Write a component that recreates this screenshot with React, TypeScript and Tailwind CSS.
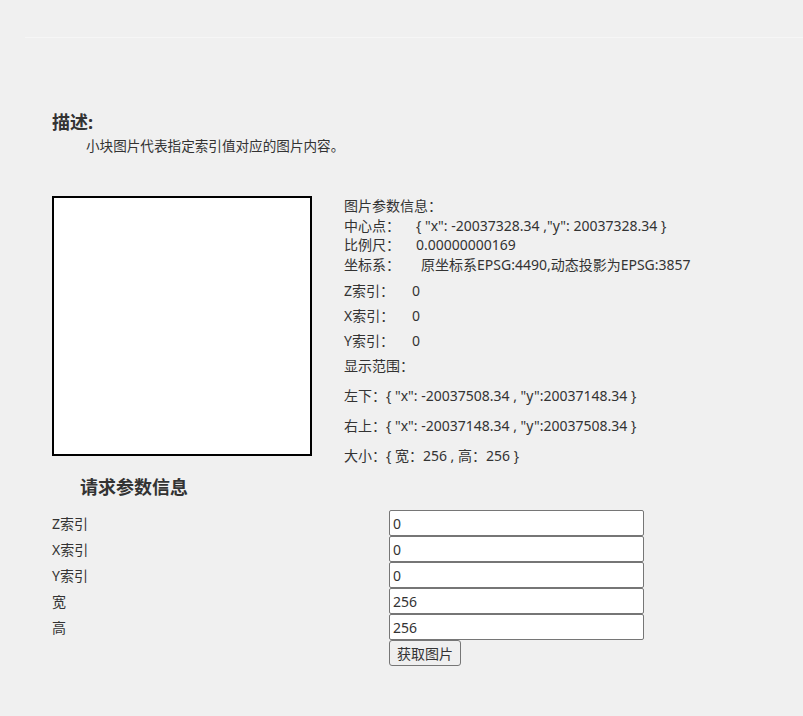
import React from "react";

const font = { fontFamily: '"Noto Sans", "Noto Sans CJK SC", sans-serif' };

const InfoLine = ({ label, value, w }: { label: string; value: string; w: string }) => (
  <div className="flex">
    <span className={`${w} shrink-0`}>{label}</span>
    <span>{value}</span>
  </div>
);

const FormRow = ({ label, value }: { label: string; value: string }) => (
  <div className="flex items-center h-[26px]">
    <span className="w-[337px] shrink-0">{label}</span>
    <input
      defaultValue={value}
      className="w-[255px] h-[26px] border border-[#767676] rounded-[2px] bg-white px-[3px] text-[14px] text-[#333] outline-none"
    />
  </div>
);

export default function App() {
  return (
    <div className="min-h-screen bg-[#f0f0f0] text-[#333] text-[14px]" style={font}>
      <div className="h-[37px]" />
      <div className="ml-[25px] h-px bg-[#f6f6f6]" />

      <div className="pl-[52px]">
        {/* 描述 */}
        <div className="mt-[72px] text-[18px] font-bold leading-[24px] text-[#333]">描述:</div>
        <div className="mt-[2px] ml-[34px] text-[13.6px] leading-[20px]">
          小块图片代表指定索引值对应的图片内容。
        </div>

        {/* image + params */}
        <div className="mt-[40px] flex">
          <div className="w-[260px] h-[260px] shrink-0 border-2 border-black bg-white" />
          <div className="ml-[32px] text-[14px]">
            <div className="leading-[19.6px]">
              <div>图片参数信息：</div>
              <InfoLine label="中心点：" value={'{ "x": -20037328.34 ,"y": 20037328.34 }'} w="w-[72px]" />
              <InfoLine label="比例尺：" value="0.00000000169" w="w-[72px]" />
              <InfoLine label="坐标系：" value="原坐标系EPSG:4490,动态投影为EPSG:3857" w="w-[77px]" />
            </div>
            <div className="mt-[4px] leading-[25px]">
              <InfoLine label="Z索引：" value="0" w="w-[68px]" />
              <InfoLine label="X索引：" value="0" w="w-[68px]" />
              <InfoLine label="Y索引：" value="0" w="w-[68px]" />
              <div>显示范围：</div>
            </div>
            <div className="mt-[3px] leading-[30px]">
              <div>左下：{'{ "x": -20037508.34 , "y":20037148.34 }'}</div>
              <div>右上：{'{ "x": -20037148.34 , "y":20037508.34 }'}</div>
              <div>大小：{'{ 宽：256 , 高：256 }'}</div>
            </div>
          </div>
        </div>

        {/* 请求参数信息 */}
        <div className="mt-[4px] ml-[28px] text-[18px] font-bold leading-[24px]">请求参数信息</div>
        <div className="mt-[11px]">
          <FormRow label="Z索引" value="0" />
          <FormRow label="X索引" value="0" />
          <FormRow label="Y索引" value="0" />
          <FormRow label="宽" value="256" />
          <FormRow label="高" value="256" />
          <div className="ml-[337px]">
            <button className="h-[26px] w-[72px] border border-[#767676] rounded-[3px] bg-[#efefef] text-[14px] text-[#333]">
              获取图片
            </button>
          </div>
        </div>
      </div>
    </div>
  );
}
